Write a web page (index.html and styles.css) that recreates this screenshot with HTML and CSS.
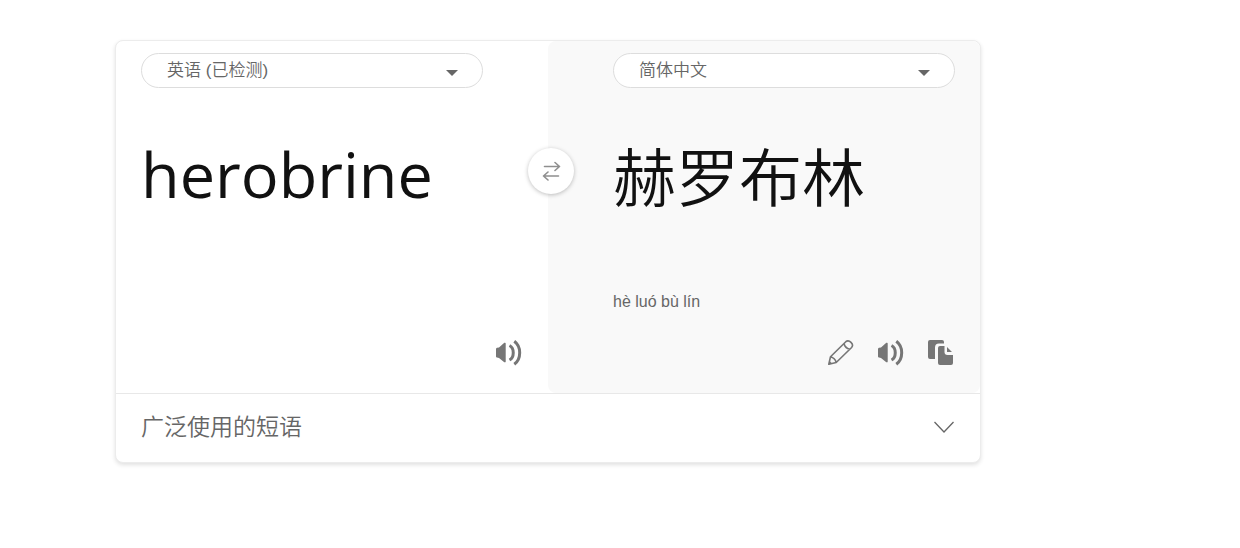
FILE: index.html
```html
<!DOCTYPE html>
<html lang="zh-CN">
<head>
<meta charset="utf-8">
<meta name="viewport" content="width=device-width, initial-scale=1">
<title>herobrine - 翻译</title>
<link rel="stylesheet" href="styles.css">
</head>
<body>
<main class="translator">
  <div class="panes">
    <section class="pane pane-source">
      <div class="picker">
        <select class="picker-select" aria-label="源语言">
          <option>英语 (已检测)</option>
        </select>
        <svg class="picker-caret" viewBox="0 0 12 6" aria-hidden="true"><path d="M0 0h12L6 6z"/></svg>
      </div>
      <textarea class="phrase phrase-source" aria-label="输入文本" rows="1" spellcheck="false">herobrine</textarea>
      <div class="tools">
        <button class="tool" type="button" aria-label="朗读原文">
          <svg class="icon" viewBox="0 0 26 26" aria-hidden="true"><path class="solid" d="M0 9Q0 8 1 7.800L3 7.500L8.300 2.800Q9.700 2.300 9.700 3.500V21.500Q9.700 22.700 8.300 22.200L3 18L1 17.500Q0 17.300 0 16.500z"/><path class="wave" d="M13.500 5.500C18.500 8 18.500 17.500 13.500 20M18.300 1.200C25.500 6.500 25.500 19 18.300 24.300"/></svg>
        </button>
      </div>
    </section>
    <section class="pane pane-target">
      <div class="picker">
        <select class="picker-select" aria-label="目标语言">
          <option>简体中文</option>
        </select>
        <svg class="picker-caret" viewBox="0 0 12 6" aria-hidden="true"><path d="M0 0h12L6 6z"/></svg>
      </div>
      <div class="phrase phrase-target">赫罗布林</div>
      <div class="pinyin">hè luó bù lín</div>
      <div class="tools">
        <button class="tool" type="button" aria-label="编辑">
          <svg class="icon" viewBox="0 0 26 26" aria-hidden="true"><path class="line" d="M.8 24.200L2.500 16.800L17.800 1.700C21-1 26.500 4.300 23.600 7.500L8.200 22.500zM2.500 16.800Q7 18 8.200 22.500M16 3.500Q17 8.200 21.800 9.200"/><path class="solid" d="M.8 24.500L1.600 21L4.200 23.600z"/></svg>
        </button>
        <button class="tool" type="button" aria-label="朗读译文">
          <svg class="icon" viewBox="0 0 26 26" aria-hidden="true"><path class="solid" d="M0 9Q0 8 1 7.800L3 7.500L8.300 2.800Q9.700 2.300 9.700 3.500V21.500Q9.700 22.700 8.300 22.200L3 18L1 17.500Q0 17.300 0 16.500z"/><path class="wave" d="M13.500 5.500C18.500 8 18.500 17.500 13.500 20M18.300 1.200C25.500 6.500 25.500 19 18.300 24.300"/></svg>
        </button>
        <button class="tool" type="button" aria-label="复制">
          <svg class="icon" viewBox="0 0 26 26" aria-hidden="true"><path class="solid" d="M2 0H14Q16 0 16 2V3.500H11Q7 3.500 7 7.500V19H2Q0 19 0 17V2Q0 0 2 0zM12 6H16.500V12Q16.500 15 19.500 15H25V23Q25 25 23 25H12Q10 25 10 23V8Q10 6 12 6zM19 7L24 12H19z"/></svg>
        </button>
      </div>
    </section>
    <button class="swap" type="button" aria-label="交换语言">
      <svg class="swap-icon" viewBox="0 0 20 20" aria-hidden="true"><path d="M3.500 5.500H18.500M14 1.500L18.500 5.500L14 9.500M17.500 15H2.500M7 11L2.500 15L7 19"/></svg>
    </button>
  </div>
  <button class="more" type="button" aria-expanded="false">
    <span class="more-title">广泛使用的短语</span>
    <svg class="more-icon" viewBox="0 0 22 14" aria-hidden="true"><path d="M1.500 2L11 12L20.500 2"/></svg>
  </button>
</main>
</body>
</html>
```

FILE: styles.css
```css
* {
  box-sizing: border-box;
}

body {
  margin: 0;
  padding: 40px 115px;
  background: #fff;
  color: #666;
  font-family: "Liberation Sans", "Noto Sans CJK SC", sans-serif;
}

button,
select,
textarea {
  margin: 0;
  font-family: inherit;
  color: inherit;
}

.translator {
  max-width: 866px;
  border: 1px solid #ececec;
  border-radius: 8px;
  background: #fff;
  box-shadow: 0 2px 4px rgba(0, 0, 0, 0.12);
}

.panes {
  position: relative;
  display: grid;
  grid-template-columns: 1fr 1fr;
  border-bottom: 1px solid #e8e8e8;
}

.pane {
  display: flex;
  flex-direction: column;
  min-width: 0;
  min-height: 352px;
  padding: 12px 25px 27px;
}

.pane-source {
  padding-right: 65px;
}

.pane-target {
  padding-left: 65px;
  border-radius: 8px;
  background: #f9f9f9;
}

.picker {
  position: relative;
}

.picker-select {
  display: block;
  appearance: none;
  width: 100%;
  height: 35px;
  padding: 0 48px 0 25px;
  border: 1px solid #ddd;
  border-radius: 18px;
  background: #fff;
  font-family: "Liberation Sans", "Noto Sans CJK SC", sans-serif;
  font-size: 17px;
  font-weight: 350;
}

.picker-caret {
  position: absolute;
  top: 17px;
  right: 25px;
  width: 12px;
  height: 6px;
  fill: #666;
  pointer-events: none;
}

.phrase {
  margin-top: 38px;
  padding: 0;
  color: #111;
  font-size: 63px;
  line-height: 96px;
}

.phrase-source {
  display: block;
  width: 100%;
  height: 96px;
  border: 0;
  background: none;
  font-family: "Open Sans", "Noto Sans CJK SC", sans-serif;
  resize: none;
  overflow: hidden;
}

.phrase-target {
  font-family: "Noto Sans CJK SC", sans-serif;
  font-weight: 350;
}

.pinyin {
  margin-top: 70px;
  font-size: 16px;
  line-height: 20px;
}

.tools {
  display: flex;
  justify-content: flex-end;
  gap: 24px;
  margin-top: auto;
}

.pane-source .tools {
  margin-right: -39px;
}

.pane-target .tools {
  margin-right: 1px;
}

.tool {
  width: 26px;
  height: 26px;
  padding: 0;
  border: 0;
  background: none;
  color: #767676;
}

.icon {
  display: block;
  width: 26px;
  height: 26px;
}

.solid {
  fill: currentColor;
}

.wave {
  fill: none;
  stroke: currentColor;
  stroke-width: 3;
}

.line {
  fill: none;
  stroke: currentColor;
  stroke-width: 1.6;
  stroke-linejoin: round;
}

.swap {
  position: absolute;
  top: 107px;
  left: calc(50% - 20px);
  display: grid;
  place-items: center;
  width: 46px;
  height: 46px;
  padding: 0;
  border: 0;
  border-radius: 50%;
  background: #fff;
  box-shadow: 0 1px 4px rgba(0, 0, 0, 0.25);
}

.swap-icon {
  width: 20px;
  height: 20px;
  fill: none;
  stroke: #8f8f8f;
  stroke-width: 1.6;
  stroke-linecap: round;
  stroke-linejoin: round;
}

.more {
  display: flex;
  align-items: center;
  justify-content: space-between;
  width: 100%;
  padding: 15px 25px 17px;
  border: 0;
  background: none;
}

.more-title {
  font-size: 23px;
  font-weight: 350;
  line-height: 36px;
}

.more-icon {
  width: 22px;
  height: 14px;
  fill: none;
  stroke: #666;
  stroke-width: 1.3;
}
```
